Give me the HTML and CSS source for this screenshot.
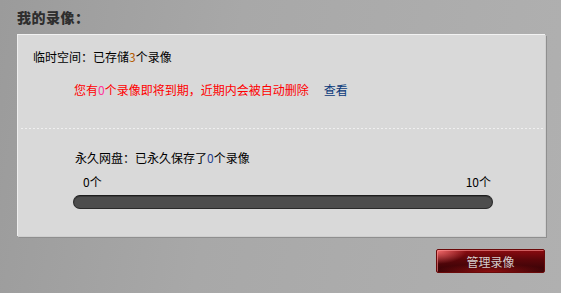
FILE: index.html
```html
<!DOCTYPE html>
<html lang="zh">
<head>
<meta charset="utf-8">
<link rel="stylesheet" href="styles.css">
</head>
<body>
<div class="page">
  <h2 class="title">我的录像<span class="colon">：</span></h2>
  <div class="panel">
    <div class="temp">
      <p class="line">临时空间<span class="colon">：</span>已存储<span class="num-orange">3</span>个录像</p>
      <p class="warn">您有<span class="num-pink">0</span>个录像即将到期，近期内会被自动删除<a class="view" href="#">查看</a></p>
    </div>
    <div class="dots"></div>
    <div class="perm">
      <p class="line">永久网盘<span class="colon">：</span>已永久保存了<span class="num-blue">0</span>个录像</p>
      <div class="scale"><span class="s0">0个</span><span class="s10">10个</span></div>
      <div class="bar"></div>
    </div>
  </div>
  <div class="actions"><a class="btn" href="#">管理录像</a></div>
</div>
</body>
</html>
```
FILE: styles.css
```css
html, body {
  margin: 0;
  padding: 0;
  height: 100%;
}
body {
  background: linear-gradient(100deg, #9b9b9b 0%, #a8a8a8 40%, #b0b0b0 100%);
  font-family: "Noto Sans CJK SC", "Noto Sans", sans-serif;
  font-size: 12px;
  color: #000;
}
.colon {
  font-family: "Noto Sans CJK TC", "Noto Sans CJK SC", sans-serif;
}
.page {
  padding: 7px 0 0 17px;
  width: 528px;
}
.title {
  margin: 0;
  font-size: 14px;
  line-height: 20px;
  font-weight: 900;
  color: #2e2e2e;
  height: 20px;
  letter-spacing: 0.5px;
}
.panel {
  margin-top: 7px;
  background: #d9d9d9;
  border-top: 1px solid #f2f2f2;
  border-left: 1px solid #eeeeee;
  box-shadow: 1px 1px 0 #cfcfcf, 2px 2px 0 #8f8f8f;
  height: 202px;
  box-sizing: border-box;
}
.line {
  margin: 0;
  line-height: 14px;
}
.temp {
  padding: 15px 0 0 15px;
  height: 78px;
  box-sizing: border-box;
}
.warn {
  margin: 19px 0 0 41px;
  line-height: 14px;
  color: #ff0000;
}
.num-orange { color: #b35a00; }
.num-pink { color: #ff3399; }
.num-blue { color: #1e3f8f; }
.view {
  color: #0a3a7a;
  text-decoration: none;
  margin-left: 15px;
}
.dots {
  margin: 15px 0 0 3px;
  height: 1px;
  background-image: linear-gradient(90deg, #f0f0f0 0, #f0f0f0 2px, transparent 2px);
  background-size: 4px 1px;
  width: 524px;
}
.perm {
  padding: 22px 0 0 57px;
}
.scale {
  display: flex;
  justify-content: space-between;
  width: 408px;
  margin: 10px 0 0 8px;
  line-height: 14px;
}
.bar {
  margin: 6px 0 0 -2px;
  width: 420px;
  height: 14px;
  box-sizing: border-box;
  border-radius: 7px;
  background: #4d4d4d;
  border: 1px solid #2a2a2a;
  border-top-color: #1e1e1e;
  box-shadow: inset 0 1px 0 #3a3a3a;
}
.actions {
  display: flex;
  justify-content: flex-end;
  margin-top: 13px;
}
.btn {
  display: flex;
  align-items: center;
  justify-content: center;
  width: 109px;
  height: 24px;
  box-sizing: border-box;
  border: 1px solid #6a0a0a;
  border-radius: 2px;
  color: #d6cccc;
  font-size: 12px;
  text-decoration: none;
  background:
    radial-gradient(ellipse 30px 14px at 0% 0%, rgba(255,120,120,0.9), rgba(255,60,60,0) 100%),
    radial-gradient(ellipse 60px 8px at 50% 100%, rgba(180,20,20,0.7), rgba(180,20,20,0) 100%),
    linear-gradient(180deg, #8c0b10 0%, #5a060a 45%, #330306 100%);
  box-shadow: inset 1px 1px 0 rgba(255,150,150,0.6);
}
```
